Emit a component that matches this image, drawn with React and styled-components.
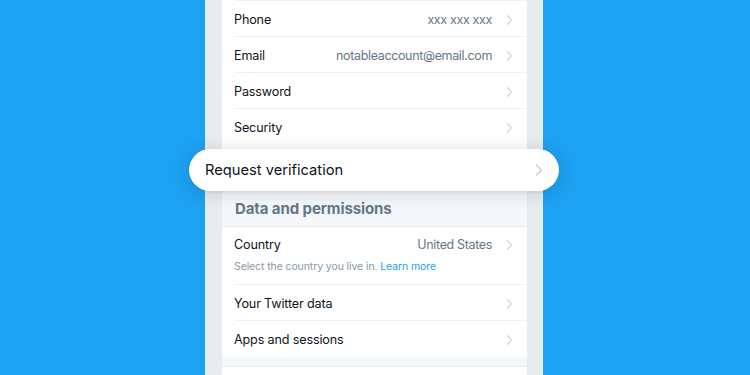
import React from 'react';
import styled, { createGlobalStyle } from 'styled-components';

const GlobalStyle = createGlobalStyle`
  html, body {
    margin: 0;
    padding: 0;
    background: #1da1f2;
    font-family: Inter, "Noto Sans", sans-serif;
    -webkit-font-smoothing: antialiased;
  }
`;

const Chevron = ({ big }) => (
  <svg
    width={big ? 8 : 7}
    height={12}
    viewBox="0 0 8 12"
    fill="none"
    stroke="#c4ced6"
    strokeWidth="1.2"
    strokeLinecap="round"
    strokeLinejoin="round"
  >
    <path d="M1.5 1 L6.5 6 L1.5 11" />
  </svg>
);

const App = () => {
  return (
    <React.Fragment>
      <GlobalStyle />
      <Page>
        <Frame>
          <Column>
            <TopLine />
            <Row>
              <Label>Phone</Label>
              <Value>xxx xxx xxx</Value>
              <Chevron />
            </Row>
            <Row>
              <Label>Email</Label>
              <Value>notableaccount@email.com</Value>
              <Chevron />
            </Row>
            <Row>
              <Label>Password</Label>
              <Chevron />
            </Row>
            <Row last>
              <Label>Security</Label>
              <Chevron />
            </Row>
            <Pill>
              <PillLabel>Request verification</PillLabel>
              <Chevron big />
            </Pill>
            <SectionHeader>Data and permissions</SectionHeader>
            <TallRow>
              <RowLine>
                <Label>Country</Label>
                <Value>United States</Value>
                <Chevron />
              </RowLine>
              <Hint>
                Select the country you live in. <HintLink>Learn more</HintLink>
              </Hint>
            </TallRow>
            <Row>
              <Label>Your Twitter data</Label>
              <Chevron />
            </Row>
            <Row last>
              <Label>Apps and sessions</Label>
              <Chevron />
            </Row>
            <Spacer />
            <Row last />
          </Column>
        </Frame>
      </Page>
    </React.Fragment>
  );
};

export default App;

const Page = styled.div`
  width: 750px;
  height: 375px;
  overflow: hidden;
  background: #1da1f2;
  padding-left: 205px;
  box-sizing: border-box;
`;

const Frame = styled.div`
  width: 338px;
  height: 375px;
  box-sizing: border-box;
  padding: 0 16px 0 17px;
  background: #e6ecf0;
`;

const Column = styled.div`
  display: flex;
  flex-direction: column;
  height: 100%;
  background: #ffffff;
`;

const TopLine = styled.div`
  height: 1px;
  margin-left: 12px;
  border-bottom: 1px solid #eef1f3;
`;

const Row = styled.div`
  display: flex;
  align-items: center;
  height: 33px;
  padding-top: 2px;
  flex-shrink: 0;
  margin-left: 12px;
  padding-right: 14px;
  border-bottom: 1px solid ${(p) => (p.last ? 'transparent' : '#eef1f3')};
`;

const Label = styled.span`
  flex: 1;
  font-size: 12.6px;
  letter-spacing: -0.15px;
  color: #0f1419;
`;

const Value = styled.span`
  font-size: 12.5px;
  letter-spacing: -0.35px;
  color: #657786;
  margin-right: 14px;
`;

const Pill = styled.div`
  display: flex;
  align-items: center;
  height: 42px;
  flex-shrink: 0;
  margin: 4px -32px 0 -33px;
  padding: 0 16px;
  background: #ffffff;
  border-radius: 21px;
  box-shadow: 0 2px 18px rgba(20, 23, 26, 0.16), 0 1px 3px rgba(20, 23, 26, 0.06);
  position: relative;
  z-index: 1;
`;

const PillLabel = styled.span`
  flex: 1;
  font-size: 14.7px;
  color: #0f1419;
`;

const SectionHeader = styled.div`
  display: flex;
  align-items: center;
  height: 35px;
  flex-shrink: 0;
  padding-left: 13px;
  background: #f5f8fa;
  border-bottom: 1px solid #e6ecf0;
  font-size: 15px;
  font-weight: 700;
  letter-spacing: -0.1px;
  color: #657786;
`;

const TallRow = styled.div`
  display: flex;
  flex-direction: column;
  flex-shrink: 0;
  height: 57px;
  margin-left: 12px;
  padding-right: 14px;
  border-bottom: 1px solid #eef1f3;
`;

const RowLine = styled.div`
  display: flex;
  align-items: center;
  height: 35px;
`;

const Hint = styled.div`
  font-size: 10.5px;
  letter-spacing: -0.1px;
  color: #8899a6;
  margin-top: -2px;
`;

const HintLink = styled.span`
  color: #1da1f2;
`;

const Spacer = styled.div`
  height: 9px;
  flex-shrink: 0;
  background: #f5f8fa;
  border-bottom: 1px solid #e6ecf0;
`;
